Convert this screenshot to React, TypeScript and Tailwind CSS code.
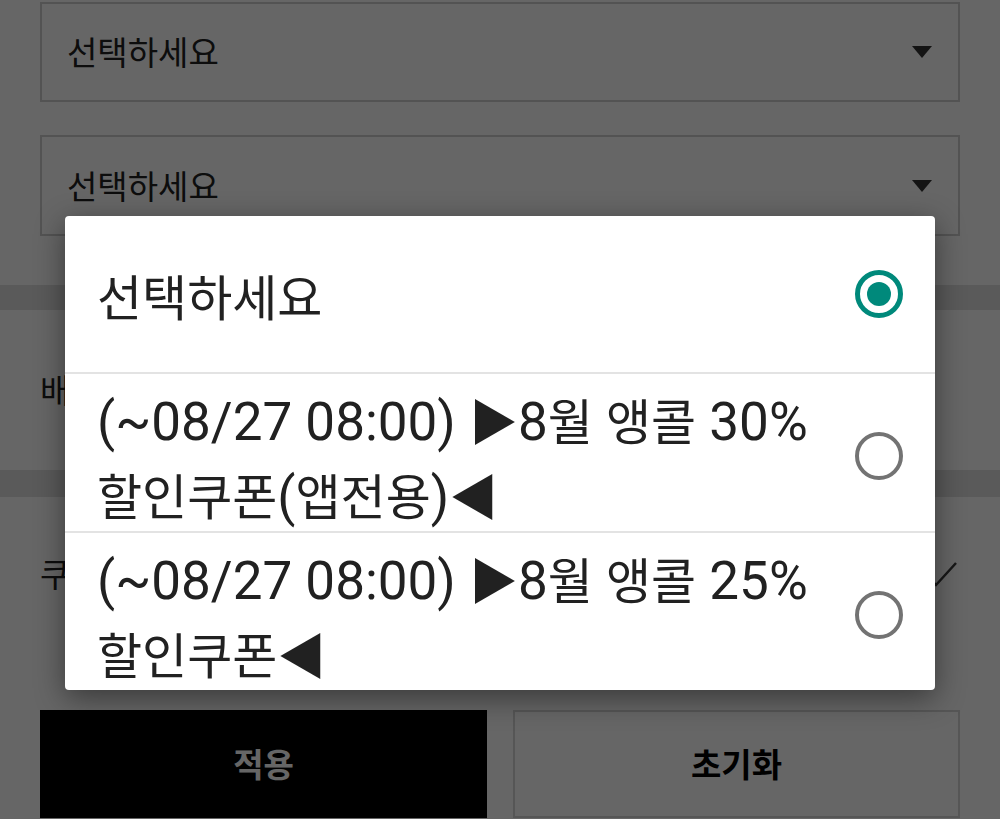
const options = [
  { id: 'none', label: '선택하세요' },
  { id: 'c30', label: '(~08/27 08:00) ▶8월 앵콜 30% 할인쿠폰(앱전용)◀' },
  { id: 'c25', label: '(~08/27 08:00) ▶8월 앵콜 25% 할인쿠폰◀' },
]

// hangul and the ▶◀ marks come from the CJK font, which runs smaller than Roboto
function Label({ text }: { text: string }) {
  const parts = text.split(/([\uAC00-\uD7A3▶◀]+)/).filter(Boolean)
  return (
    <>
      {parts.map((p, i) =>
        /[\uAC00-\uD7A3▶◀]/.test(p) ? (
          <span key={i} className="leading-none">
            {p}
          </span>
        ) : (
          <span key={i} className="font-['Roboto',sans-serif] text-[53px] leading-none">
            {p}
          </span>
        ),
      )}
    </>
  )
}

function SelectBox({ className = '' }: { className?: string }) {
  return (
    <div
      className={`flex items-center justify-between border-2 border-[#d0d0d0] pl-[25px] pr-[26px] ${className}`}
    >
      <span className="text-[33px] text-[#212121]">선택하세요</span>
      <span className="h-0 w-0 border-x-[10px] border-t-[12px] border-x-transparent border-t-[#333]" />
    </div>
  )
}

function Radio({ checked }: { checked: boolean }) {
  return checked ? (
    <span className="flex h-[48px] w-[48px] shrink-0 items-center justify-center rounded-full border-[5px] border-[#00897b]">
      <span className="h-[24px] w-[24px] rounded-full bg-[#00897b]" />
    </span>
  ) : (
    <span className="h-[48px] w-[48px] shrink-0 rounded-full border-[4px] border-[#737373]" />
  )
}

export default function App() {
  const selected = 'none'

  return (
    <div className="relative h-[819px] w-[1000px] overflow-hidden bg-white font-['Noto_Sans_CJK_KR',sans-serif] text-[#212121]">
      {/* page behind the dialog */}
      <div className="flex flex-col">
        <div className="px-10 pt-[2px] pb-[49px]">
          <SelectBox className="h-[100px]" />
          <SelectBox className="mt-[33px] h-[101px]" />
        </div>

        <div className="h-[25px] bg-[#e0e0e0]" />

        <div className="flex h-[160px] items-center px-10">
          <span className="text-[33px]">배송비 쿠폰</span>
        </div>

        <div className="h-[27px] bg-[#e0e0e0]" />

        <div className="flex h-[160px] items-center justify-between px-10 pb-[6px]">
          <span className="text-[33px]">쿠폰</span>
          <svg width="44" height="26" viewBox="0 0 44 26" className="mr-[2px]" fill="none">
            <path d="M2 2 L22 24 L42 2" stroke="#3a3a3a" strokeWidth="2.5" />
          </svg>
        </div>

        <div className="mt-[53px] grid grid-cols-2 gap-[26px] px-10">
          <button className="flex h-[108px] items-center justify-center bg-black text-[33px] font-bold text-white">
            적용
          </button>
          <button className="flex h-[108px] items-center justify-center border-2 border-[#d8d8d8] bg-white text-[33px] font-bold text-black">
            초기화
          </button>
        </div>
      </div>

      {/* dim */}
      <div className="absolute inset-0 bg-black/60" />

      {/* dialog */}
      <div className="absolute left-[65px] top-[216px] h-[474px] w-[870px] overflow-hidden rounded-[4px] bg-white shadow-[0_8px_30px_rgba(0,0,0,0.45)]">
        {options.map((o, i) => (
          <div
            key={o.id}
            className={`flex items-center gap-6 px-[32px] ${
              i === 0 ? 'h-[156px]' : 'min-h-[158px] border-t-2 border-[#e3e3e3] pt-[7px]'
            }`}
          >
            <p className="flex-1 break-keep text-[49px] leading-[75px] text-[#212121]">
              <Label text={o.label} />
            </p>
            <Radio checked={o.id === selected} />
          </div>
        ))}
      </div>
    </div>
  )
}
